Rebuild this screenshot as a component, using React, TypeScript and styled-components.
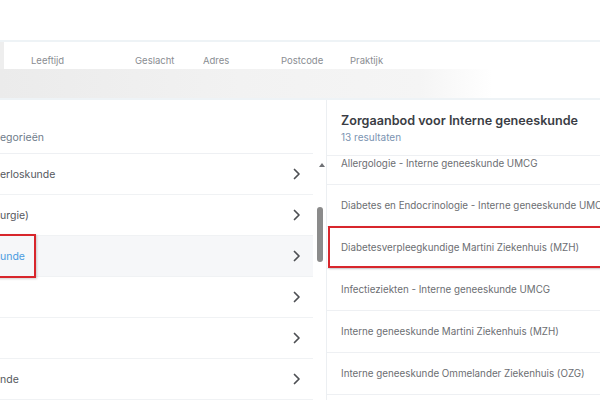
import React from "react"
import styled, { createGlobalStyle } from "styled-components"

const GlobalStyle = createGlobalStyle`
  html, body {
    margin: 0;
    padding: 0;
    background: #fff;
    font-family: Inter, "Noto Sans", "Liberation Sans", sans-serif;
  }
`

const columns = [
  { label: "Leeftijd", width: 104 },
  { label: "Geslacht", width: 68 },
  { label: "Adres", width: 78 },
  { label: "Postcode", width: 69 },
  { label: "Praktijk", width: 80 },
]

const categories = [
  { label: "erloskunde" },
  { label: "urgie)" },
  { label: "unde", active: true },
  { label: "" },
  { label: "" },
  { label: "nde" },
]

const results = [
  "Allergologie - Interne geneeskunde UMCG",
  "Diabetes en Endocrinologie - Interne geneeskunde UMCG",
  "Diabetesverpleegkundige Martini Ziekenhuis (MZH)",
  "Infectieziekten - Interne geneeskunde UMCG",
  "Interne geneeskunde Martini Ziekenhuis (MZH)",
  "Interne geneeskunde Ommelander Ziekenhuis (OZG)",
]

const Chevron = () => (
  <svg width="8" height="12" viewBox="0 0 8 12">
    <path d="M1.5 1.5 L6 6 L1.5 10.5" fill="none" stroke="#4d4f53" strokeWidth="1.7" strokeLinecap="round" strokeLinejoin="round" />
  </svg>
)

export default function App() {
  return (
    <S.Page>
      <GlobalStyle />
      <S.TopSpace />
      <S.TableHead>
        <S.HeadEdge />
        {columns.map((c) => (
          <S.HeadCell key={c.label} w={c.width}>{c.label}</S.HeadCell>
        ))}
      </S.TableHead>
      <S.BlurRow />
      <S.Body>
        <S.LeftPanel>
          <S.LeftHeading>egorieën</S.LeftHeading>
          {categories.map((c, i) => (
            <S.CategoryRow key={i} active={!!c.active}>
              <S.CategoryText active={!!c.active}>{c.label}</S.CategoryText>
              <Chevron />
            </S.CategoryRow>
          ))}
        </S.LeftPanel>
        <S.Scrollbar>
          <S.ArrowUp />
          <S.Thumb />
        </S.Scrollbar>
        <S.RightPanel>
          <S.RightHeader>
            <S.Title>Zorgaanbod voor Interne geneeskunde</S.Title>
            <S.Count>13 resultaten</S.Count>
          </S.RightHeader>
          <S.Viewport>
            <S.ResultList>
              {results.map((r) => (
                <S.ResultRow key={r}>{r}</S.ResultRow>
              ))}
            </S.ResultList>
          </S.Viewport>
        </S.RightPanel>
        <S.Highlight style={{ left: -4, top: 134, width: 40, height: 44 }} />
        <S.Highlight style={{ left: 328, top: 126, width: 290, height: 42 }} />
      </S.Body>
    </S.Page>
  )
}

var S = {
  Page: styled.div`
    width: 600px;
    height: 400px;
    overflow: hidden;
    display: flex;
    flex-direction: column;
  `,
  TopSpace: styled.div`
    height: 40px;
    flex-shrink: 0;
  `,
  TableHead: styled.div`
    height: 27px;
    flex-shrink: 0;
    display: flex;
    align-items: center;
    border-top: 2px solid #eef3f6;
  `,
  HeadEdge: styled.div`
    width: 4px;
    height: 100%;
    background: #eeeeee;
    margin-right: 27px;
  `,
  HeadCell: styled.div<{ w: number }>`
    width: ${({ w }) => w}px;
    font-size: 9.5px;
    color: #8a8d92;
    padding-top: 10px;
  `,
  BlurRow: styled.div`
    height: 29px;
    flex-shrink: 0;
    background: linear-gradient(90deg, #ebebeb 0%, #f2f2f2 40%, #f5f5f5 70%, #ffffff 82%);
    border-bottom: 2px solid #eef3f6;
  `,
  Body: styled.div`
    position: relative;
    flex: 1;
    display: flex;
    min-height: 0;
  `,
  LeftPanel: styled.div`
    width: 313px;
    flex-shrink: 0;
    display: flex;
    flex-direction: column;
  `,
  LeftHeading: styled.div`
    height: 55px;
    box-sizing: border-box;
    padding-top: 31px;
    font-size: 10.5px;
    color: #6e7b8a;
    border-bottom: 1px solid #eef0f3;
  `,
  CategoryRow: styled.div<{ active: boolean }>`
    height: 41px;
    flex-shrink: 0;
    box-sizing: border-box;
    display: flex;
    align-items: center;
    justify-content: space-between;
    padding-right: 12px;
    border-bottom: 1px solid #f0f2f4;
    background: ${({ active }) => (active ? "#f6f7f9" : "#fff")};
  `,
  CategoryText: styled.span<{ active: boolean }>`
    font-size: 10.5px;
    color: ${({ active }) => (active ? "#4a9be0" : "#55585d")};
  `,
  Scrollbar: styled.div`
    width: 13px;
    flex-shrink: 0;
    display: flex;
    flex-direction: column;
    align-items: center;
    padding-top: 63px;
    border-right: 1px solid #eceff2;
  `,
  ArrowUp: styled.div`
    width: 0;
    height: 0;
    border-left: 3px solid transparent;
    border-right: 3px solid transparent;
    border-bottom: 4px solid #6f7175;
    margin-left: 4px;
  `,
  Thumb: styled.div`
    width: 6px;
    height: 55px;
    margin-top: 40px;
    margin-left: 1px;
    border-radius: 3px;
    background: #8b8b8b;
  `,
  RightPanel: styled.div`
    flex: 1;
    min-width: 0;
    display: flex;
    flex-direction: column;
  `,
  RightHeader: styled.div`
    height: 56px;
    box-sizing: border-box;
    padding: 13px 0 0 14px;
    border-bottom: 1px solid #eef0f3;
  `,
  Title: styled.div`
    font-size: 12.6px;
    font-weight: 600;
    color: #3a3d44;
    white-space: nowrap;
  `,
  Count: styled.div`
    margin-top: 3px;
    font-size: 10px;
    color: #7b93b1;
  `,
  Viewport: styled.div`
    flex: 1;
    overflow: hidden;
  `,
  ResultList: styled.div`
    margin-top: -13px;
  `,
  ResultRow: styled.div`
    height: 42px;
    box-sizing: border-box;
    display: flex;
    align-items: center;
    padding-left: 14px;
    white-space: nowrap;
    font-size: 9.8px;
    color: #6c6e72;
    border-bottom: 1px solid #eef0f3;
  `,
  Highlight: styled.div`
    position: absolute;
    box-sizing: border-box;
    border: 2px solid #d8262c;
    box-shadow: 1px 1px 2px rgba(0, 0, 0, 0.18);
    pointer-events: none;
  `,
}
